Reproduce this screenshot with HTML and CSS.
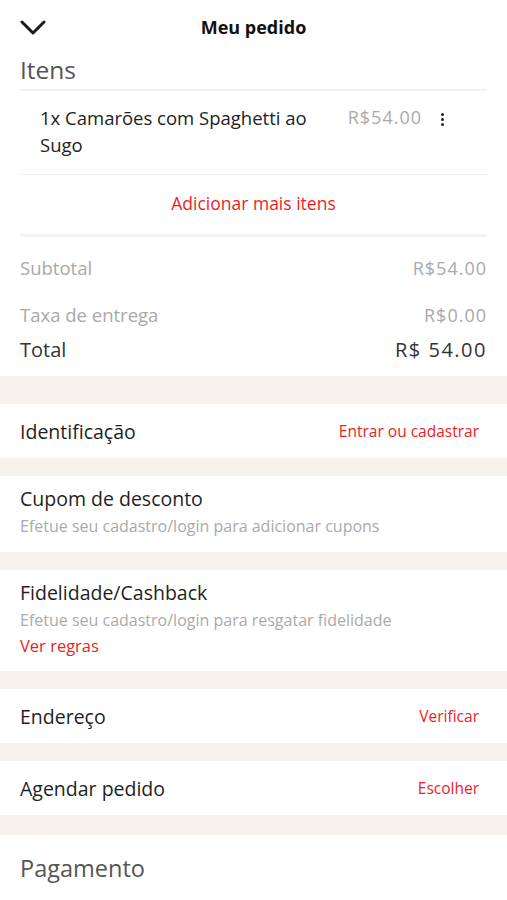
FILE: index.html
```html
<!DOCTYPE html>
<html>
<head>
<title>Meu pedido</title>
<meta name="viewport" content="width=device-width, initial-scale=1.0">
<link rel="stylesheet" href="styles.css">
</head>
<body>

<div class="topbar">
  <svg class="back" width="26" height="16" viewBox="0 0 26 16">
    <path d="M2 2 L13 13 L24 2" fill="none" stroke="#1a1a1a" stroke-width="3" stroke-linecap="round" stroke-linejoin="round"/>
  </svg>
  <h1>Meu pedido</h1>
</div>

<div class="block">
  <h2 class="section-title">Itens</h2>
  <div class="item">
    <div class="item-name">1x Camarões com Spaghetti ao Sugo</div>
    <div class="item-price">R$54.00</div>
    <div class="kebab"><span></span><span></span><span></span></div>
  </div>
  <div class="add-more">Adicionar mais itens</div>

  <div class="totals">
    <div class="line muted"><span>Subtotal</span><span class="money">R$54.00</span></div>
    <div class="line muted fee"><span>Taxa de entrega</span><span class="money">R$0.00</span></div>
    <div class="line total"><span>Total</span><span class="money">R$ 54.00</span></div>
  </div>
</div>

<div class="row first">
  <span class="row-title">Identificação</span>
  <span class="link">Entrar ou cadastrar</span>
</div>

<div class="row stacked">
  <div class="row-title">Cupom de desconto</div>
  <div class="hint">Efetue seu cadastro/login para adicionar cupons</div>
</div>

<div class="row stacked loyalty">
  <div class="row-title">Fidelidade/Cashback</div>
  <div class="hint">Efetue seu cadastro/login para resgatar fidelidade</div>
  <div class="link rules">Ver regras</div>
</div>

<div class="row">
  <span class="row-title">Endereço</span>
  <span class="link">Verificar</span>
</div>

<div class="row">
  <span class="row-title">Agendar pedido</span>
  <span class="link">Escolher</span>
</div>

<div class="block payment">
  <h2 class="section-title">Pagamento</h2>
</div>

</body>
</html>
```

FILE: styles.css
```css
body {
  margin: 0;
  font-family: "Open Sans", "Liberation Sans", sans-serif;
  background-color: #f7f2ee;
  color: #222;
}

.topbar {
  background: #fff;
  height: 54px;
  display: flex;
  align-items: center;
  justify-content: center;
  position: relative;
}
.topbar h1 {
  font-size: 18px;
  font-weight: 700;
  margin: 0;
  color: #111;
}
.back {
  position: absolute;
  left: 20px;
  top: 20px;
}

.block {
  background: #fff;
  padding: 0 20px;
}
.section-title {
  margin: 0;
  font-size: 24.5px;
  font-weight: 400;
  color: #555;
  line-height: 32px;
  padding-bottom: 3px;
  border-bottom: 2px solid #f1f1f1;
}

.item {
  display: flex;
  align-items: flex-start;
  padding: 13px 0 16px 20px;
  border-bottom: 1px solid #f1f1f1;
}
.item-name {
  flex: 1;
  font-size: 18.5px;
  line-height: 27px;
  color: #222;
}
.item-price {
  font-size: 18px;
  letter-spacing: 1px;
  line-height: 27px;
  color: #aaa;
  margin-left: 24px;
}
.kebab {
  width: 20px;
  margin-left: 10px;
  margin-right: 35px;
  padding-top: 9px;
  display: flex;
  flex-direction: column;
  align-items: center;
  gap: 2px;
}
.kebab span {
  width: 3px;
  height: 3px;
  background: #222;
  border-radius: 50%;
}

.add-more {
  text-align: center;
  color: #ee1c25;
  font-size: 17.5px;
  line-height: 24px;
  padding: 16px 0 19px;
  border-bottom: 3px solid #f3f3f3;
}

.totals {
  padding: 19px 0 12px;
}
.line {
  display: flex;
  justify-content: space-between;
}
.line.muted {
  color: #a9a9a9;
  font-size: 18.5px;
  line-height: 24px;
  margin-bottom: 23px;
}
.line.muted .money {
  font-size: 18px;
  letter-spacing: 1px;
}
.line.fee {
  margin-bottom: 9px;
}
.line.total {
  color: #333;
  font-size: 20px;
  line-height: 28px;
}
.line.total .money {
  letter-spacing: 1.5px;
}

.row {
  background: #fff;
  margin-top: 18px;
  padding: 0 28px 0 20px;
  height: 54px;
  display: flex;
  align-items: center;
  justify-content: space-between;
}
.row.first {
  margin-top: 28px;
}
.row-title {
  font-size: 19.5px;
  color: #1f1f1f;
}
.link {
  color: #ee1c25;
  font-size: 15.5px;
}
.row.stacked {
  height: auto;
  display: block;
  padding-top: 10px;
  padding-bottom: 12px;
}
.row.stacked .row-title {
  line-height: 26px;
}
.hint {
  font-size: 16px;
  color: #aaa;
  line-height: 28px;
}
.rules {
  font-size: 16.5px;
  line-height: 24px;
}
.row.loyalty {
  padding-bottom: 13px;
}

.payment {
  margin-top: 20px;
  padding-top: 17px;
  padding-bottom: 40px;
}
.payment .section-title {
  border-bottom: none;
  font-size: 23.5px;
}
```
